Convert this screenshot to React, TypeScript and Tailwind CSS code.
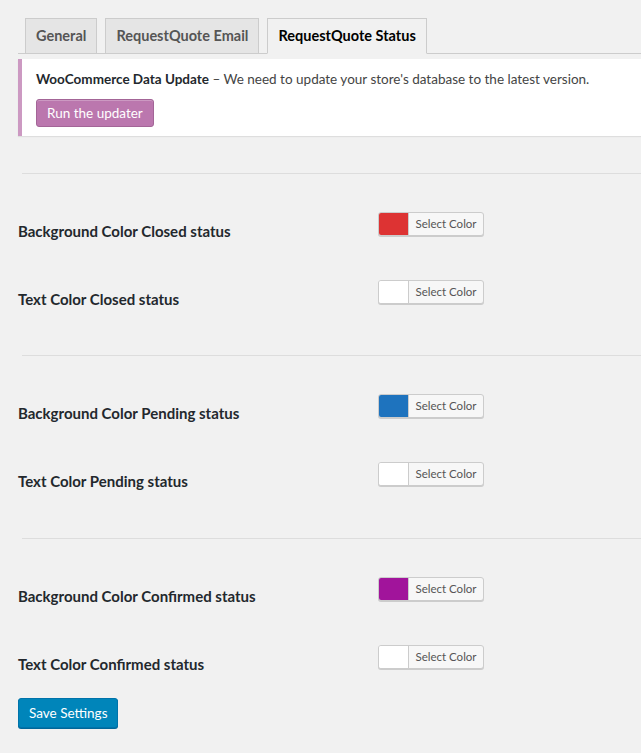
import React from 'react'

type Row = { label: string; color: string }

const sections: Row[][] = [
  [
    { label: 'Background Color Closed status', color: '#dd3333' },
    { label: 'Text Color Closed status', color: '#ffffff' }
  ],
  [
    { label: 'Background Color Pending status', color: '#1e73be' },
    { label: 'Text Color Pending status', color: '#ffffff' }
  ],
  [
    { label: 'Background Color Confirmed status', color: '#a1149b' },
    { label: 'Text Color Confirmed status', color: '#ffffff' }
  ]
]

// bottom padding of each section, the last one is followed by the save button
const sectionPad = ['pb-[51px]', 'pb-[52px]', 'pb-0']

function ColorPicker({ color }: { color: string }) {
  return (
    <button className="flex h-6 w-[106px] overflow-hidden rounded-[3px] border border-[#cccccc] bg-[#f7f7f7] shadow-[0_1px_0_#cccccc]">
      <span className="h-full w-[30px] border-r border-[#cccccc]" style={{ backgroundColor: color }} />
      <span className="flex flex-1 items-center justify-center text-[11.5px] text-[#555555]">Select Color</span>
    </button>
  )
}

export default function App() {
  const tabs = ['General', 'RequestQuote Email', 'RequestQuote Status']

  return (
    <div className="min-h-[753px] overflow-hidden bg-[#f1f1f1] pl-[18px] pt-[18px] font-['Lato',sans-serif] text-[13.5px] text-[#23282d]">
      {/* Tabs */}
      <div className="-mr-10 flex h-[36px] items-end gap-2 border-b border-[#cccccc] pl-[7px]">
        {tabs.map((tab, i) => {
          const active = i === tabs.length - 1
          return (
            <div
              key={tab}
              className={
                active
                  ? 'relative -mb-px flex h-[36px] items-center border border-b-[#f1f1f1] border-[#cccccc] bg-[#f1f1f1] px-[10px] text-[14.5px] font-bold text-black'
                  : 'flex h-[35px] items-center border border-b-0 border-[#cccccc] bg-[#e5e5e5] px-[10px] text-[14.5px] font-bold text-[#555555]'
              }
            >
              {tab}
            </div>
          )
        })}
      </div>

      {/* Notice */}
      <div className="-mr-10 mt-[5px] h-[77px] border-l-4 border-[#cc99c2] bg-white pl-[14px] pt-[11px] shadow-[0_1px_1px_rgba(0,0,0,0.08)]">
        <p className="leading-[18px] text-[#444444]">
          <strong className="text-[#23282d]">WooCommerce Data Update</strong> – We need to update your store's database to the latest version.
        </p>
        <button className="mt-[11px] h-[28px] rounded-[3px] border border-[#a36597] bg-[#bb77ae] px-[10px] text-[13.5px] text-white shadow-[inset_0_1px_0_rgba(255,255,255,0.25)]">
          Run the updater
        </button>
      </div>

      {/* Settings */}
      <div className="mt-[37px]">
        {sections.map((rows, s) => (
          <div key={s} className="ml-1 border-t border-[#dddddd]">
            <div className={`-ml-1 flex flex-col gap-11 pt-[38px] ${sectionPad[s]}`}>
              {rows.map(row => (
                <div key={row.label} className="flex h-6 items-start">
                  <div className="mt-[12px] w-[360px] text-[15px] font-bold leading-[15px] text-[#23282d]">{row.label}</div>
                  <ColorPicker color={row.color} />
                </div>
              ))}
            </div>
          </div>
        ))}
        <button className="mt-[29px] h-[30px] rounded-[3px] border border-[#0073aa] bg-[#0085ba] px-[10px] text-[13.5px] text-white shadow-[0_1px_0_#006799]">
          Save Settings
        </button>
      </div>
    </div>
  )
}
